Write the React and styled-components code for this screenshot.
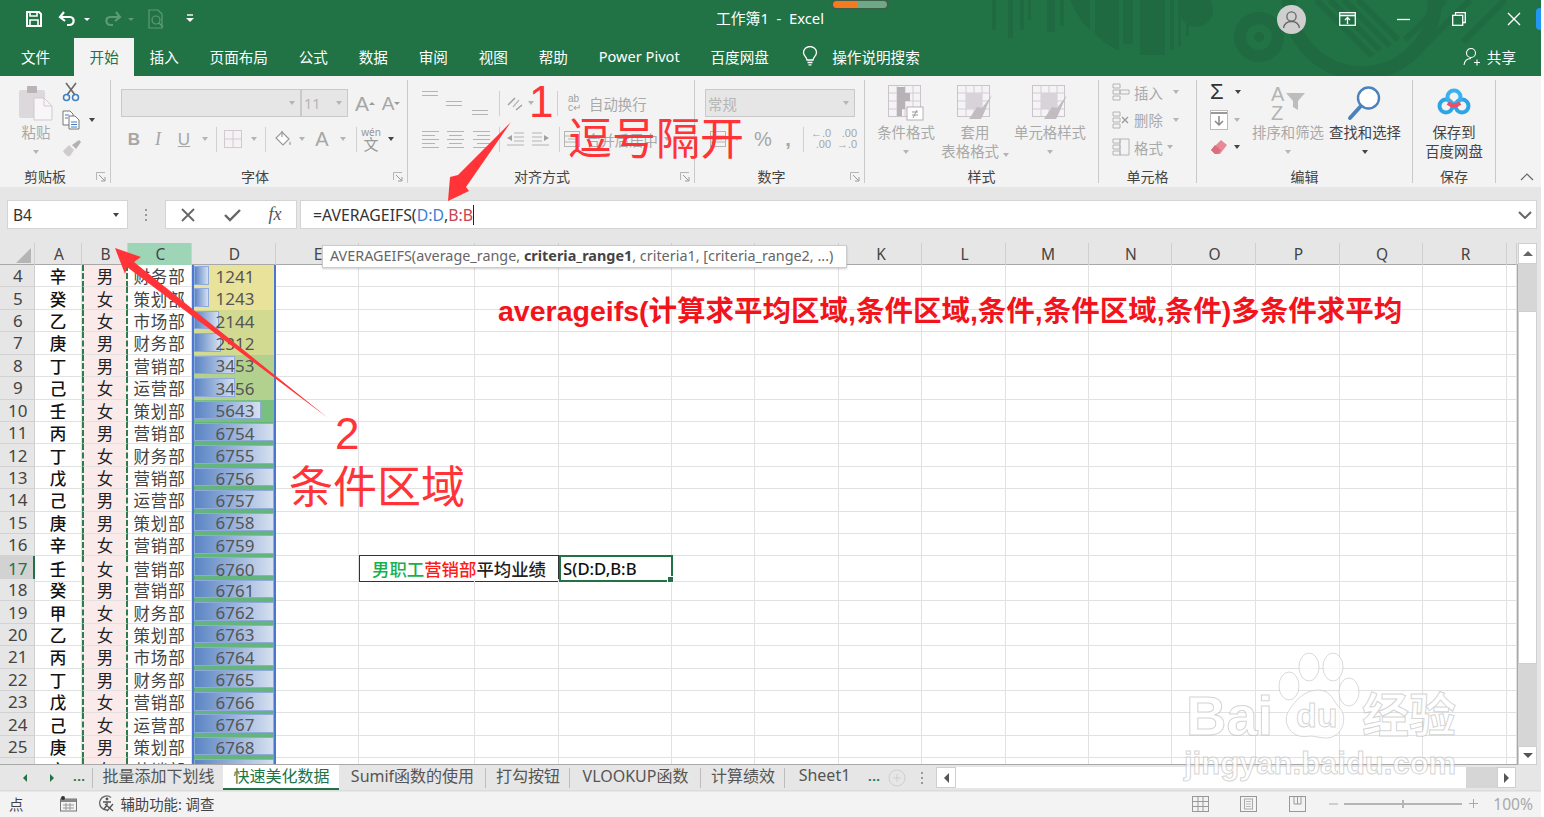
import React from 'react'
import styled, { createGlobalStyle } from 'styled-components'

const GlobalStyle = createGlobalStyle`
  html, body { margin: 0; padding: 0; background: #fff; overflow: hidden; }
  body { font-family: "Noto Sans CJK SC", "Noto Sans", sans-serif; }
`

const CJK = `"Noto Sans", "Noto Sans CJK SC", sans-serif`
const GREEN = '#217346'
const MUTED = '#a9a9a9'

const Window = styled.div`
  position: relative;
  width: 1541px;
  height: 817px;
  display: flex;
  flex-direction: column;
  overflow: hidden;
  font-family: ${CJK};
`
const Header = styled.header`
  position: relative;
  height: 76px;
  flex: none;
  background: ${GREEN};
`
const Decor = styled.svg`
  position: absolute;
  left: 0;
  top: 0;
`
const TitleRow = styled.div`
  position: relative;
  height: 38px;
  display: flex;
  align-items: center;
  padding-left: 22px;
  color: #fff;
`
const Slot = styled.div`
  flex: none;
  width: ${p => p.$w}px;
  margin-left: ${p => p.$ml || 0}px;
  display: flex;
  align-items: center;
  justify-content: center;
`
const Title = styled.div`
  margin-left: 517px;
  font-size: 14.8px;
  white-space: pre;
  line-height: 20px;
  position: relative;
  top: -1px;
`
const Pill = styled.div`
  align-self: flex-start;
  margin-left: 7px;
  width: 58px;
  height: 11px;
  margin-top: -1px;
  border-radius: 6px;
  border: 2px solid #3c5f4a;
  box-sizing: border-box;
  background: linear-gradient(90deg, #f47a20 0 47%, #6fa884 47%);
`
const Avatar = styled.div`
  margin-left: auto;
  margin-right: 14px;
  width: 29px;
  height: 29px;
  border-radius: 50%;
  background: #cfcfcf;
  display: flex;
  align-items: center;
  justify-content: center;
`
const MenuRow = styled.nav`
  position: relative;
  height: 38px;
  display: flex;
  align-items: stretch;
  padding-left: 21px;
  color: #fff;
  font-size: 14.6px;
`
const MenuItem = styled.div`
  display: flex;
  align-items: center;
  padding: 0 15.4px 2px;
  white-space: nowrap;
  background: ${p => (p.$active ? '#f3f3f3' : 'transparent')};
  color: ${p => (p.$active ? GREEN : '#fff')};
`
const FileItem = styled(MenuItem)`
  padding: 0 24px 2px 0;
`
const BulbItem = styled(MenuItem)`
  padding: 0 14px 2px 18px;
`
const SearchItem = styled(MenuItem)`
  padding-left: 0;
`
const Share = styled.div`
  margin-left: auto;
  padding: 0 25px 2px 0;
  display: flex;
  align-items: center;
  gap: 6px;
  font-size: 14.6px;
`
const BlueMark = styled.div`
  position: absolute;
  left: 1536px;
  top: 8px;
  width: 8px;
  height: 22px;
  border-radius: 4px 0 0 4px;
  background: #2196f3;
`

const Ribbon = styled.section`
  height: 111px;
  flex: none;
  display: flex;
  background: #f3f3f3;
  color: ${MUTED};
  font-size: 14.4px;
  padding-top: 4px;
  box-sizing: border-box;
`
const Group = styled.div`
  flex: none;
  width: ${p => p.$w}px;
  height: 103px;
  box-sizing: border-box;
  border-right: 1px solid #c9c9c9;
  display: flex;
  flex-direction: column;
`
const GroupBody = styled.div`
  flex: 1;
  min-height: 0;
  display: flex;
  padding-left: ${p => p.$pl || 0}px;
  padding-top: ${p => p.$pt || 0}px;
`
const GroupFoot = styled.div`
  height: 14px;
  position: relative;
  top: 1px;
  display: grid;
  grid-template-columns: 1fr auto 1fr;
  align-items: center;
  font-size: 14px;
  color: #444;
  line-height: 14px;
  & > span { grid-column: 2; white-space: nowrap; position: relative; left: ${p => p.$shift || 0}px; }
`
const Launcher = styled.svg`
  grid-column: 3;
  justify-self: end;
  margin-right: 4px;
`
const Big = styled.div`
  flex: none;
  width: ${p => p.$w}px;
  margin-left: ${p => p.$ml || 0}px;
  display: flex;
  flex-direction: column;
  align-items: center;
  color: ${p => (p.$on ? '#444' : MUTED)};
  line-height: 19px;
  white-space: nowrap;
`
const BigIcon = styled.div`
  height: 38px;
  display: flex;
  align-items: center;
  justify-content: center;
  margin-bottom: 1px;
`
const BigCaret = styled.div`
  height: 19px;
  display: flex;
  align-items: center;
`
const Caret = styled.i`
  display: inline-block;
  width: 0;
  height: 0;
  border-left: 3.5px solid transparent;
  border-right: 3.5px solid transparent;
  border-top: 4px solid ${p => (p.$dark ? '#444' : '#b5b5b5')};
`
const Stack = styled.div`
  display: flex;
  flex-direction: column;
  gap: ${p => p.$gap || 0}px;
  margin-top: ${p => p.$mt || 0}px;
  margin-left: ${p => p.$ml || 0}px;
`
const ToolRow = styled.div`
  display: flex;
  align-items: center;
  height: ${p => p.$h || 24}px;
  white-space: nowrap;
  margin-top: ${p => p.$mt || 0}px;
`
const ToolLabel = styled.span`
  margin: 0 ${p => p.$mr || 10}px 0 4px;
`
const InlineLabel = styled.span`
  margin-left: ${p => p.$ml}px;
`
const ShiftUp = styled(Slot)`
  height: ${p => p.$h}px;
  align-items: ${p => p.$align || 'center'};
`
const Sep = styled.div`
  flex: none;
  width: 1px;
  height: 25px;
  background: #d0d0d0;
`
const Combo = styled.div`
  flex: none;
  box-sizing: border-box;
  width: ${p => p.$w}px;
  height: 28px;
  background: #e6e6e6;
  border: 1px solid #c9c9c9;
  display: flex;
  align-items: center;
  justify-content: space-between;
  padding: 0 5px 0 2px;
  font-size: 14.4px;
  color: #b5b5b5;
`
const Glyph = styled.span`
  font-family: ${p => (p.$serif ? '"Liberation Serif"' : '"Liberation Sans"')}, sans-serif;
  font-size: ${p => p.$s || 17}px;
  font-weight: ${p => (p.$b ? 700 : 400)};
  font-style: ${p => (p.$i ? 'italic' : 'normal')};
  text-decoration: ${p => (p.$u ? 'underline' : 'none')};
  color: ${p => p.$c || '#a6a6a6'};
  width: ${p => (p.$w ? `${p.$w}px` : 'auto')};
  line-height: 1;
`
const Wen = styled.span`
  display: flex;
  flex-direction: column;
  align-items: center;
  font-size: 10px;
  line-height: 10px;
  color: #999;
  & b { font-weight: 400; font-size: 15px; line-height: 14px; }
`
const DecimalPair = styled.span`
  display: flex;
  flex-direction: column;
  align-items: flex-end;
  font: 11px/11px "Liberation Sans", sans-serif;
  color: #a6a6a6;
`
const WrapMark = styled.span`
  display: block;
  width: 16px;
  font: 10px/9px "Liberation Sans", sans-serif;
  color: #a0a0a0;
`
const SortBox = styled.span`
  position: relative;
  display: block;
  width: 34px;
  height: 38px;
  & > b {
    position: absolute;
    left: 0;
    font: 400 20px/20px "Liberation Sans", sans-serif;
    color: #b4b4b4;
  }
  & > svg { position: absolute; left: 15px; top: 8px; }
`
const Collapse = styled.div`
  flex: 1;
  display: flex;
  align-items: flex-end;
  justify-content: flex-end;
  padding: 0 7px 2px 0;
  height: 103px;
  box-sizing: border-box;
`

const FormulaBand = styled.div`
  height: 56px;
  flex: none;
  box-sizing: border-box;
  padding: 13px 4px 14px 7px;
  background: #e6e6e6;
  display: flex;
  align-items: stretch;
`
const FBox = styled.div`
  flex: ${p => (p.$grow ? 1 : 'none')};
  width: ${p => (p.$w ? `${p.$w}px` : 'auto')};
  margin-left: ${p => p.$ml || 0}px;
  box-sizing: border-box;
  background: #fff;
  border: 1px solid #d4d4d4;
  display: flex;
  align-items: center;
  font-size: 15.5px;
  color: #333;
`
const NameBox = styled(FBox)`
  justify-content: space-between;
  padding: 0 8px 0 5px;
`
const FormulaText = styled.div`
  flex: 1;
  padding-left: 12px;
  display: flex;
  align-items: center;
  font-size: 15.8px;
  white-space: pre;
  line-height: 22px;
`
const Ref = styled.span`
  color: ${p => p.$c};
`
const TextCaret = styled.i`
  display: inline-block;
  width: 1px;
  height: 20px;
  background: #222;
`
const FxMark = styled.span`
  font: italic 18px "Liberation Serif", serif;
  color: #555;
`
const Dots = styled.div`
  flex: none;
  width: ${p => p.$w || 36}px;
  display: flex;
  flex-direction: column;
  gap: 3px;
  align-items: center;
  justify-content: center;
  & i { width: 2px; height: 2px; background: #9a9a9a; }
`

const SheetArea = styled.div`
  flex: none;
  display: flex;
  height: 522px;
`
const SheetMain = styled.div`
  position: relative;
  flex: none;
  width: 1518px;
  display: flex;
  flex-direction: column;
`
const COLUMNS = '35px 47px 46px 64px 84px 83px 116px 84px 113px 83px 84px 83px 84px 83px 83px 84px 84px 83px 84px 10px'
const HeadRow = styled.div`
  height: 21px;
  flex: none;
  display: grid;
  grid-template-columns: ${COLUMNS};
  background: #e6e6e6;
  border-bottom: 1px solid #a8a8a8;
`
const ColHead = styled.div`
  display: flex;
  align-items: center;
  justify-content: center;
  padding-left: 2px;
  font-size: 15.5px;
  color: #444;
  border-right: 1px solid #cfcfcf;
  background: ${p => (p.$on ? '#9fd5b7' : 'transparent')};
`
const Corner = styled.div`
  display: flex;
  align-items: flex-end;
  justify-content: flex-end;
  padding: 0 3px 2px 0;
  border-right: 1px solid #cfcfcf;
`
const Body = styled.div`
  flex: 1;
  min-height: 0;
  overflow: hidden;
  background: #fff;
  border-right: 1px solid #a8a8a8;
  border-bottom: 1px solid #a8a8a8;
`
const Row = styled.div`
  height: 22.43px;
  display: grid;
  grid-template-columns: ${COLUMNS};
`
const Cell = styled.div`
  box-sizing: border-box;
  border-right: 1px solid #e1e1e1;
  border-bottom: 1px solid #e1e1e1;
  display: flex;
  align-items: center;
  justify-content: center;
  font-size: 16.5px;
  white-space: nowrap;
  overflow: hidden;
  color: #333;
`
const RowHead = styled(Cell)`
  background: ${p => (p.$on ? '#d2d2d2' : '#e6e6e6')};
  color: ${p => (p.$on ? GREEN : '#444')};
  border-right: ${p => (p.$on ? `2px solid ${GREEN}` : '1px solid #cfcfcf')};
  border-bottom: 1px solid #d2d2d2;
  justify-content: flex-start;
  font-size: 17px;
  padding-left: ${p => (p.$short ? 13 : 8)}px;
`
const NameCell = styled(Cell)`
  color: #111;
  font-weight: 500;
  padding-top: 1px;
`
const GenderCell = styled(Cell)`
  background: #fbeaea;
  color: #222;
  padding-top: 1px;
  border-left: 2px dashed #2f7d4f;
  border-right: 2px dashed #2f7d4f;
`
const DeptCell = styled(Cell)`
  color: #444;
  padding-top: 1px;
  letter-spacing: 0.8px;
`
const ValueCell = styled(Cell)`
  position: relative;
  background: ${p => p.$bg};
  border-left: 2px solid #4a78d0;
  border-right: 2px solid #4a78d0;
  border-bottom: 0;
  color: #555;
  font-size: 17px;
  padding-left: 2px;
  & span { position: relative; }
`
const DataBar = styled.div`
  position: absolute;
  left: 0;
  top: 1px;
  height: 18.5px;
  box-sizing: border-box;
  border: 1px solid #8ea9db;
  background: linear-gradient(90deg, #5b85c5, #d6e0f0);
`
const LabelCell = styled(Cell)`
  grid-column: span 2;
  margin-top: -1px;
  height: calc(100% + 1px);
  border: 1px solid #333;
  font-weight: 500;
  font-size: 17.4px;
  color: #222;
`
const Tinted = styled.span`
  color: ${p => p.$c};
`
const ActiveCell = styled(Cell)`
  position: relative;
  overflow: visible;
  margin: -1px -1px 0 0;
  height: calc(100% + 1px);
  border: 2px solid ${GREEN};
  justify-content: flex-start;
  padding-left: 2px;
  font-weight: 500;
  font-size: 16.7px;
  color: #111;
`
const Handle = styled.i`
  position: absolute;
  right: -3px;
  bottom: -3px;
  width: 5px;
  height: 5px;
  background: ${GREEN};
  border: 1px solid #fff;
`
const Tooltip = styled.div`
  position: absolute;
  left: 322px;
  top: 2px;
  width: 525px;
  height: 23px;
  box-sizing: border-box;
  background: #fff;
  border: 1px solid #cdcdcd;
  box-shadow: 0 1px 2px rgba(0, 0, 0, 0.2);
  padding: 0 0 3px 7px;
  display: flex;
  align-items: center;
  font-size: 14.4px;
  color: #666;
  white-space: pre;
  & b { color: #444; }
`
const VScroll = styled.div`
  flex: none;
  width: 23px;
  padding-right: 4px;
  box-sizing: border-box;
  background: #e6e6e6;
  display: flex;
`
const VTrack = styled.div`
  flex: 1;
  background: #d6d6d6;
  display: flex;
  flex-direction: column;
  justify-content: space-between;
`
const ScrollBtn = styled.div`
  flex: none;
  box-sizing: border-box;
  width: ${p => (p.$w ? `${p.$w}px` : 'auto')};
  height: ${p => p.$h || 20}px;
  background: #fff;
  border: 1px solid #cfcfcf;
  display: flex;
  align-items: center;
  justify-content: center;
`
const VThumb = styled.div`
  flex: none;
  height: 353px;
  margin-top: 47px;
  margin-bottom: 82px;
  background: #fff;
  border: 1px solid #cfcfcf;
  box-sizing: border-box;
`

const TabBar = styled.div`
  height: 25px;
  flex: none;
  background: #e6e6e6;
  display: flex;
  align-items: stretch;
  font-size: 16px;
  color: #555;
  border-bottom: 1px solid #dcdcdc;
`
const Tab = styled.div`
  flex: none;
  box-sizing: border-box;
  display: flex;
  align-items: center;
  justify-content: center;
  width: ${p => p.$w}px;
  padding: 0 0 5px 1px;
  white-space: nowrap;
  ${p => p.$active && `
    background: #fff;
    color: ${GREEN};
    border-bottom: 2px solid ${GREEN};
    padding-bottom: 3px;
  `}
`
const TabSep = styled.div`
  flex: none;
  width: 1px;
  margin: 3px 0 2px;
  background: #bdbdbd;
`
const DotsH = styled.div`
  flex: none;
  color: ${GREEN};
  font-weight: 700;
  letter-spacing: 0.5px;
  font-size: 13px;
  line-height: 22px;
  margin-left: ${p => p.$ml}px;
  width: ${p => p.$w}px;
`
const HTrack = styled.div`
  flex: none;
  width: 580px;
  margin: 2px 0;
  background: #d6d6d6;
  display: flex;
`
const HThumb = styled.div`
  flex: none;
  width: 510px;
  background: #fff;
`
const Spacer = styled.div`
  flex: 1;
`

const StatusBar = styled.footer`
  flex: 1;
  min-height: 0;
  background: #f3f3f3;
  display: flex;
  align-items: center;
  font-size: 14.4px;
  color: #444;
  padding: 0 0 2px 9px;
  border-top: 1px solid #e6e6e6;
`
const StatusRight = styled.div`
  margin-left: auto;
  display: flex;
  align-items: center;
  color: ${MUTED};
`
const Slider = styled.div`
  position: relative;
  width: 118px;
  height: 2px;
  background: #b5b5b5;
  margin: 0 5px;
  &::after {
    content: '';
    position: absolute;
    left: 58px;
    top: -3px;
    width: 2px;
    height: 8px;
    background: #b5b5b5;
  }
`
const Percent = styled.span`
  margin: 0 8px 0 14px;
  font-size: 15.6px;
`

const Layer = styled.div`
  position: absolute;
  inset: 0;
  pointer-events: none;
`
const Drawing = styled.svg`
  position: absolute;
  left: 0;
  top: 0;
`
const Note = styled.div`
  position: absolute;
  left: ${p => p.$x}px;
  top: ${p => p.$y}px;
  color: ${p => p.$c || '#ff3338'};
  font-size: ${p => p.$s || 44}px;
  font-weight: ${p => p.$w || 400};
  line-height: 1;
  white-space: nowrap;
  font-family: "Liberation Sans", "Noto Sans CJK SC", sans-serif;
`
const Mark = styled.div`
  position: absolute;
  left: ${p => p.$x}px;
  top: ${p => p.$y}px;
  font-size: ${p => p.$s}px;
  font-weight: 700;
  line-height: 1;
  white-space: nowrap;
  color: rgba(255, 255, 255, 0.75);
  -webkit-text-stroke: 1px rgba(175, 175, 175, 0.55);
  font-family: "Liberation Sans", "Noto Sans CJK SC", sans-serif;
`

const RAW = `4 辛 男 财务部 1241|5 癸 女 策划部 1243|6 乙 女 市场部 2144|7 庚 男 财务部 2312|8 丁 男 营销部 3453|9 己 女 运营部 3456|10 壬 女 策划部 5643|11 丙 男 营销部 6754|12 丁 女 财务部 6755|13 戊 女 营销部 6756|14 己 男 运营部 6757|15 庚 男 策划部 6758|16 辛 女 营销部 6759|17 壬 女 营销部 6760|18 癸 男 营销部 6761|19 甲 女 财务部 6762|20 乙 女 策划部 6763|21 丙 男 市场部 6764|22 丁 男 财务部 6765|23 戊 女 营销部 6766|24 己 女 运营部 6767|25 庚 男 策划部 6768|26 辛 女 营销部 6769`
const rows = RAW.split('|').map(r => r.split(' '))
// F..J sit under the function tooltip
const LETTERS = ['E', '', '', '', '', '', 'K', 'L', 'M', 'N', 'O', 'P', 'Q', 'R', '']

const scaleColor = v => {
  if (v < 2000) return '#e9e29a'
  if (v < 3000) return '#d2da92'
  if (v < 4000) return '#b3d18e'
  if (v < 6000) return '#79bf82'
  return '#63b57d'
}
const barWidth = v => Math.min(80, (v / 6754) * 80)

const Svg = ({ w = 18, h = 18, children, ...rest }) => (
  <svg width={w} height={h} viewBox={`0 0 ${w} ${h}`} fill="none" {...rest}>{children}</svg>
)

const SaveIcon = () => (
  <Svg><path d="M2 2h12l2 2v12H2z" stroke="#fff" strokeWidth="2" /><path d="M5 2v4h7V2M5 16v-6h8v6" stroke="#fff" strokeWidth="1.6" /></Svg>
)
const UndoIcon = ({ c = '#fff', flip }) => (
  <Svg w={20} style={flip ? { transform: 'scaleX(-1)' } : undefined}>
    <path d="M6 2L2 7l5 4" stroke={c} strokeWidth="2.2" /><path d="M3 7h9c5 0 5 8-1 8H9" stroke={c} strokeWidth="2.2" />
  </Svg>
)
const PreviewIcon = () => (
  <Svg w={18} h={22}><path d="M2 2h9l4 4v14H2z" stroke="#5f9a78" strokeWidth="1.2" /><circle cx="9" cy="12" r="4" stroke="#5f9a78" strokeWidth="1.2" /><path d="M12 15l4 4" stroke="#5f9a78" strokeWidth="1.4" /></Svg>
)
const CustomizeIcon = () => (
  <Svg w={10} h={10}><path d="M2 1h6" stroke="#fff" strokeWidth="1.4" /><path d="M1 4h8L5 8z" fill="#fff" /></Svg>
)
const UserIcon = () => (
  <Svg w={19} h={19}><circle cx="9.5" cy="6.5" r="4.6" stroke="#666" strokeWidth="1.3" /><path d="M1.5 18c1-5 4-6.5 8-6.5s7 1.5 8 6.5" stroke="#666" strokeWidth="1.3" /></Svg>
)
const RibbonOpts = () => (
  <Svg w={17} h={14}><rect x=".7" y=".7" width="15.6" height="12.6" stroke="#fff" strokeWidth="1.3" /><path d="M1 3.5h15" stroke="#fff" strokeWidth="1.6" /><path d="M8.5 12V6M6 8l2.5-2.5L11 8" stroke="#fff" strokeWidth="1.3" /></Svg>
)
const MinIcon = () => <Svg w={13} h={3}><path d="M0 1.5h13" stroke="#fff" strokeWidth="1.3" /></Svg>
const RestoreIcon = () => (
  <Svg w={14} h={14}><rect x=".7" y="3.3" width="10" height="10" stroke="#fff" strokeWidth="1.3" /><path d="M3.5 3V.7h9.8v9.8H11" stroke="#fff" strokeWidth="1.3" /></Svg>
)
const CloseIcon = () => <Svg w={14} h={14}><path d="M1 1l12 12M13 1L1 13" stroke="#fff" strokeWidth="1.4" /></Svg>
const BulbIcon = () => (
  <Svg w={16} h={20}><path d="M5 14c0-3-3.5-4-3.5-7.5a6.5 6 0 0 1 13 0C14.5 10 11 11 11 14z" stroke="#fff" strokeWidth="1.3" /><path d="M5.5 16.5h5M6.5 18.8h3" stroke="#fff" strokeWidth="1.3" /></Svg>
)
const ShareIcon = () => (
  <Svg w={18} h={19}><circle cx="8" cy="6" r="4.5" stroke="#fff" strokeWidth="1.1" /><path d="M1 18c.5-4 3-6.5 7-6.5M11 15.5h6M14 12.5v6" stroke="#fff" strokeWidth="1.1" /></Svg>
)
const DialogMark = () => (
  <Launcher width="10" height="10" viewBox="0 0 10 10" fill="none"><path d="M.5 8V.5H9" stroke="#b5b5b5" /><path d="M3 3l5.5 5.5M9 5v4H5" stroke="#999" /></Launcher>
)
const PasteIcon = () => (
  <Svg w={34} h={36}>
    <rect x="0" y="5" width="26" height="28" rx="2" fill="#dcd8dc" />
    <rect x="8" y="1" width="10" height="7" rx="1" fill="#b8b4b8" />
    <path d="M15 13h10l8 8v14H15z" fill="#f8f6f8" stroke="#cfcbcf" />
    <path d="M25 13v8h8" stroke="#cfcbcf" />
  </Svg>
)
const CutIcon = () => (
  <Svg w={18} h={20}><path d="M4 1l9 12M14 1L5 13" stroke="#6a6a6a" strokeWidth="1.6" /><circle cx="4.5" cy="15.5" r="3" stroke="#3f7fc0" strokeWidth="1.5" /><circle cx="13.5" cy="15.5" r="3" stroke="#3f7fc0" strokeWidth="1.5" /></Svg>
)
const CopyIcon = () => (
  <Svg w={18} h={20}><path d="M1 1h7l3 3v11H1z" fill="#fff" stroke="#777" /><path d="M7 6h6l4 4v9H7z" fill="#fff" stroke="#777" /><path d="M3 5h4M3 8h3M9 12h6M9 14.5h6M9 17h6" stroke="#3f7fc0" /></Svg>
)
const BrushIcon = () => (
  <Svg w={20} h={18}><path d="M1 12l6-6 5 5-4 6c-3 1-5-2-7-5z" fill="#cfcbcf" /><path d="M10 6l7-5 2 2-5 7z" fill="#b4b0b4" /></Svg>
)
const BorderIcon = () => (
  <Svg w={18} h={18}><rect x=".5" y=".5" width="17" height="17" fill="#f6f1f5" stroke="#cfcbcf" /><path d="M9 1v16M1 9h16" stroke="#cfcbcf" /></Svg>
)
const FillIcon = () => (
  <Svg w={18} h={18}><path d="M8 2l7 7-6 6-7-7z" stroke="#999" strokeWidth="1.2" fill="#fff" /><path d="M8 1v6" stroke="#999" strokeWidth="1.2" /><path d="M16 11c1.5 2 1.5 4 0 4s-1.5-2 0-4z" fill="#bbb" /></Svg>
)
const Lines = ({ widths, gap = 4 }) => (
  <Svg w={18} h={(widths.length - 1) * gap + 1}>
    {widths.map(([x, l], i) => <path key={i} d={`M${x} ${i * gap + 0.5}h${l}`} stroke="#b4b4b4" />)}
  </Svg>
)
const OrientIcon = () => (
  <Svg w={18} h={18}><path d="M2 11l7-7M10 16l6-5" stroke="#a0a0a0" strokeWidth="1.5" /><path d="M7 13l6-7" stroke="#b8b8b8" strokeWidth="1.2" /></Svg>
)
const IndentIcon = ({ right }) => (
  <Svg w={18} h={14} style={right ? { transform: 'scaleX(-1)' } : undefined}>
    <path d="M8 1h10M8 5h10M8 9h10M1 13h17" stroke="#b4b4b4" /><path d="M1 6l5-3v6z" fill="#a0a0a0" />
  </Svg>
)
const MergeIcon = () => (
  <Svg w={16} h={16}><rect x=".5" y=".5" width="15" height="15" stroke="#b4b4b4" /><path d="M1 5h14M1 11h14M4 8h8" stroke="#b4b4b4" /></Svg>
)
const GridSheet = ({ children }) => (
  <Svg w={36} h={36}>
    <rect x=".5" y=".5" width="32" height="31" fill="#f6f3f6" stroke="#c9c5c9" />
    <path d="M1 8h31M1 16h31M1 24h31M9 1v30M17 1v30M25 1v30" stroke="#d2ced2" />
    {children}
  </Svg>
)
const CondIcon = () => (
  <GridSheet>
    <path d="M9 2h8v6h5v8h-5v8h-3v7H9z" fill="#b6b2b6" />
    <rect x="19" y="22" width="16" height="13" fill="#fff" stroke="#b4b0b4" />
    <path d="M24 27h6M24 30h6M29 25l-4 8" stroke="#999" />
  </GridSheet>
)
const TableStyleIcon = () => (
  <GridSheet>
    <path d="M9 8h16v16H9z" fill="#d8d3d8" />
    <path d="M35 10L25 23l-5-1-8 12h12l3-6 2-5z" fill="#c0bcc0" />
  </GridSheet>
)
const CellInsert = ({ kind }) => (
  <Svg w={18} h={18}>
    <path d="M1 1h7v4H1zM1 7h7v4H1zM1 13h7v4H1z" stroke="#b4b4b4" />
    {kind === 'ins' && <path d="M8 7h9v4H8z" stroke="#b4b4b4" />}
    {kind === 'del' && <path d="M10 6l6 6M16 6l-6 6" stroke="#999" strokeWidth="1.3" />}
    {kind === 'fmt' && <path d="M8 1h9v16H8z" stroke="#b4b4b4" />}
  </Svg>
)
const FillDown = () => (
  <Svg w={18} h={20}><rect x=".5" y=".5" width="17" height="19" fill="#fff" stroke="#bbb" /><path d="M1 3h16" stroke="#999" strokeWidth="2" /><path d="M9 6v9M5 11l4 4 4-4" stroke="#888" strokeWidth="1.5" /></Svg>
)
const EraserIcon = () => (
  <Svg w={18} h={16}><path d="M11 1l6 5-7 9-5 0-4-4z" fill="#e88a96" /><path d="M1 11l4-5 6 5-3 4H5z" fill="#d96f7d" /></Svg>
)
const SortIcon = () => (
  <SortBox>
    <b style={{ top: 0 }}>A</b>
    <b style={{ top: 19 }}>Z</b>
    <Svg w={20} h={20}><path d="M0 1h19l-7 8v9l-5-3V9z" fill="#bdbdbd" /></Svg>
  </SortBox>
)
const FindIcon = () => (
  <Svg w={36} h={36}><circle cx="21.5" cy="13" r="10.5" fill="#fff" stroke="#4a82bd" strokeWidth="2.4" /><path d="M13 22L3 33" stroke="#4a82bd" strokeWidth="4" strokeLinecap="round" /></Svg>
)
const NetdiskIcon = () => (
  <Svg w={34} h={30}>
    <circle cx="9" cy="18" r="6.5" stroke="#2ba5e6" strokeWidth="4" />
    <circle cx="25" cy="18" r="6.5" stroke="#2ba5e6" strokeWidth="4" />
    <circle cx="17" cy="9" r="6.5" stroke="#3ab1ee" strokeWidth="4" />
    <path d="M11 15c3 3 9 3 12 0" stroke="#ee4e65" strokeWidth="4" />
  </Svg>
)
const Chevron = ({ c = '#666', up }) => (
  <Svg w={14} h={8}><path d={up ? 'M1 7l6-6 6 6' : 'M1 1l6 6 6-6'} stroke={c} strokeWidth={up ? 1.2 : 2} /></Svg>
)
const Triangle = ({ dir = 'up', c = '#666', s = 5 }) => {
  const d = {
    up: `M0 ${s}L${s} 0L${s * 2} ${s}z`,
    down: `M0 0L${s} ${s}L${s * 2} 0z`,
    left: `M${s} 0L0 ${s}L${s} ${s * 2}z`,
    right: `M0 0L${s} ${s}L0 ${s * 2}z`,
  }[dir]
  const tall = dir === 'left' || dir === 'right'
  return <Svg w={tall ? s : s * 2} h={tall ? s * 2 : s}><path d={d} fill={c} /></Svg>
}
const CornerMark = () => <Svg w={15} h={15}><path d="M15 0v15H0z" fill="#b5b5b5" /></Svg>
const ViewGrid = () => (
  <Svg w={17} h={16}><rect x=".5" y=".5" width="16" height="15" stroke="#999" /><path d="M6 1v14M11 1v14M1 5.5h15M1 10.5h15" stroke="#999" /></Svg>
)
const ViewPage = () => (
  <Svg w={17} h={16}><rect x=".5" y=".5" width="16" height="15" stroke="#999" /><rect x="4.5" y="3" width="8" height="10" stroke="#aaa" /><path d="M6 5.5h5M6 8h5M6 10.5h5" stroke="#bbb" /></Svg>
)
const ViewBreak = () => (
  <Svg w={17} h={16}><rect x=".5" y=".5" width="16" height="15" stroke="#999" /><path d="M5 1v7h7V1M8.5 1v7" stroke="#999" /></Svg>
)
const MacroIcon = () => (
  <Svg w={17} h={16}><rect x=".5" y="3" width="16" height="12" fill="#f3f3f3" stroke="#777" /><path d="M1 3h15v3H1z" fill="#888" /><circle cx="3" cy="2" r="2" fill="#333" /><path d="M3 9h11M3 12h11M6 7v7M10 7v7" stroke="#999" /></Svg>
)
const AccessIcon = () => (
  <Svg w={18} h={17}><path d="M13 2.5A7 7 0 1 0 9 15" stroke="#666" strokeWidth="1.3" /><circle cx="9" cy="4" r="1.4" fill="#555" /><path d="M5 7h8M9 7v3M9 10l-3 4M7 9l8 7M15 9l-6 7" stroke="#555" strokeWidth="1.3" /></Svg>
)

const App = () => (
  <Window>
    <GlobalStyle />
    <Header>
      <Decor width="1541" height="76" viewBox="0 0 1541 76" fill="none">
        <g fill="#1f6a41">
          <path d="M992 0h4v30h-4zM1008 0h5v38h-5zM1020 0h4v30h-4zM1028 0h3v20h-3z" />
          <path d="M1047 0h8v32h-8zM1060 0h4v26h-4zM1070 0h20v30q-10-8-20-30z" />
          <path d="M1095 0h24v50q-12-4-24-16zM1140 0h25v55h-25zM1123 0h10v44h-10z" />
          <path d="M1170 0h4v50h-4zM1178 0h3v46h-3zM1186 0h3v36h-3z" />
          <circle cx="1196" cy="10" r="17" />
        </g>
        <circle cx="1259" cy="37" r="19" stroke="#1f6a41" strokeWidth="12" />
        <circle cx="1259" cy="37" r="5" fill="#1f6a41" />
        <circle cx="1362" cy="0" r="73" stroke="#1f6a41" strokeWidth="14" />
        <path d="M1316 0l56 56M1330 0l50 50M1344 0l46 46M1358 0l40 40M1445 0l-40 40M1470 0l-45 45M1505 0l-42 42" stroke="#1f6a41" strokeWidth="6" />
      </Decor>
      <TitleRow>
        <Slot $w={24}><SaveIcon /></Slot>
        <Slot $w={32} $ml={6}><UndoIcon /></Slot>
        <Slot $w={6}><Triangle dir="down" c="#fff" s={3} /></Slot>
        <Slot $w={32} $ml={6}><UndoIcon c="#5f9a78" flip /></Slot>
        <Slot $w={6}><Triangle dir="down" c="#5f9a78" s={3} /></Slot>
        <Slot $w={24} $ml={10}><PreviewIcon /></Slot>
        <Slot $w={18} $ml={13}><CustomizeIcon /></Slot>
        <Title>工作簿1  -  Excel</Title>
        <Pill />
        <Avatar><UserIcon /></Avatar>
        <Slot $w={55}><RibbonOpts /></Slot>
        <Slot $w={56}><MinIcon /></Slot>
        <Slot $w={55}><RestoreIcon /></Slot>
        <Slot $w={55}><CloseIcon /></Slot>
      </TitleRow>
      <MenuRow>
        <FileItem>文件</FileItem>
        <MenuItem $active>开始</MenuItem>
        {['插入', '页面布局', '公式', '数据', '审阅', '视图', '帮助', 'Power Pivot', '百度网盘'].map(t => <MenuItem key={t}>{t}</MenuItem>)}
        <BulbItem><BulbIcon /></BulbItem>
        <SearchItem>操作说明搜索</SearchItem>
        <Share><ShareIcon />共享</Share>
      </MenuRow>
    </Header>
    <BlueMark />

    <Ribbon>
      <Group $w={111}>
        <GroupBody $pl={19} $pt={4}>
          <Big $w={34}>
            <BigIcon><PasteIcon /></BigIcon>
            粘贴
            <BigCaret><Caret /></BigCaret>
          </Big>
          <Stack $gap={8} $mt={-2} $ml={9}>
            <ToolRow $h={20}><CutIcon /></ToolRow>
            <ToolRow $h={20}><CopyIcon /><Slot $w={24}><Caret $dark /></Slot></ToolRow>
            <ToolRow $h={20}><BrushIcon /></ToolRow>
          </Stack>
        </GroupBody>
        <GroupFoot $shift={-10}><span>剪贴板</span><DialogMark /></GroupFoot>
      </Group>

      <Group $w={297}>
        <GroupBody $pl={10} $pt={9}>
          <Stack>
            <ToolRow $h={28}>
              <Combo $w={180}><span /><Caret /></Combo>
              <Combo $w={47}>11<Caret /></Combo>
              <Slot $w={26} $ml={4}><Glyph $s={21}>A</Glyph><Triangle c="#999" s={3} /></Slot>
              <Slot $w={26}><Glyph $s={19}>A</Glyph><Triangle dir="down" c="#999" s={3} /></Slot>
            </ToolRow>
            <ToolRow $h={24} $mt={10}>
              <Slot $w={24} $ml={1}><Glyph $b>B</Glyph></Slot>
              <Slot $w={24}><Glyph $i $serif $s={18}>I</Glyph></Slot>
              <Slot $w={28}><Glyph $u>U</Glyph></Slot>
              <Slot $w={14}><Caret /></Slot>
              <Slot $w={8}><Sep /></Slot>
              <Slot $w={26}><BorderIcon /></Slot>
              <Slot $w={16}><Caret /></Slot>
              <Slot $w={6}><Sep /></Slot>
              <Slot $w={30}><FillIcon /></Slot>
              <Slot $w={8}><Caret /></Slot>
              <Slot $w={32}><Glyph $s={20}>A</Glyph></Slot>
              <Slot $w={10}><Caret /></Slot>
              <Slot $w={16}><Sep /></Slot>
              <Slot $w={14}><Wen>wén<b>文</b></Wen></Slot>
              <Slot $w={26}><Caret $dark /></Slot>
            </ToolRow>
          </Stack>
        </GroupBody>
        <GroupFoot $shift={-4}><span>字体</span><DialogMark /></GroupFoot>
      </Group>

      <Group $w={287}>
        <GroupBody $pl={11} $pt={9}>
          <Stack>
            <ToolRow $h={28}>
              <ShiftUp $w={24} $h={24} $align="flex-start"><Lines widths={[[0, 16], [0, 16]]} /></ShiftUp>
              <ShiftUp $w={24} $h={14}><Lines widths={[[0, 16], [0, 16]]} /></ShiftUp>
              <ShiftUp $w={28} $h={24} $align="flex-end"><Lines widths={[[0, 16], [0, 16]]} /></ShiftUp>
              <Slot $w={8}><Sep /></Slot>
              <Slot $w={24}><OrientIcon /></Slot>
              <Slot $w={8}><Caret /></Slot>
              <Slot $w={22}><span /></Slot>
              <Sep />
              <Slot $w={16} $ml={10}><WrapMark>ab<br />c↵</WrapMark></Slot>
              <InlineLabel $ml={5}>自动换行</InlineLabel>
            </ToolRow>
            <ToolRow $h={24} $mt={10}>
              <Slot $w={24}><Lines widths={[[0, 17], [0, 13], [0, 17], [0, 13], [0, 17]]} /></Slot>
              <Slot $w={26}><Lines widths={[[0, 17], [2, 13], [0, 17], [2, 13], [0, 17]]} /></Slot>
              <Slot $w={26}><Lines widths={[[0, 17], [4, 13], [0, 17], [4, 13], [0, 17]]} /></Slot>
              <Slot $w={8}><Sep /></Slot>
              <Slot $w={24}><IndentIcon /></Slot>
              <Slot $w={28}><IndentIcon right /></Slot>
              <Slot $w={8}><Sep /></Slot>
              <Slot $w={16} $ml={1}><MergeIcon /></Slot>
              <InlineLabel $ml={6}>合并后居中</InlineLabel>
              <Slot $w={18}><Caret /></Slot>
            </ToolRow>
          </Stack>
        </GroupBody>
        <GroupFoot $shift={-9}><span>对齐方式</span><DialogMark /></GroupFoot>
      </Group>

      <Group $w={170}>
        <GroupBody $pl={10} $pt={9}>
          <Stack>
            <ToolRow $h={28}><Combo $w={150}><span>常规</span><Caret /></Combo></ToolRow>
            <ToolRow $h={24} $mt={10}>
              <Slot $w={24} $ml={1}><MergeIcon /></Slot>
              <Slot $w={14}><Caret /></Slot>
              <Slot $w={28} $ml={5}><Glyph $s={20}>%</Glyph></Slot>
              <Slot $w={22}><Glyph $s={20} $b>,</Glyph></Slot>
              <Slot $w={8}><Sep /></Slot>
              <Slot $w={28}><DecimalPair><span>←.0</span><span>.00</span></DecimalPair></Slot>
              <Slot $w={24}><DecimalPair><span>.00</span><span>→.0</span></DecimalPair></Slot>
            </ToolRow>
          </Stack>
        </GroupBody>
        <GroupFoot $shift={-8}><span>数字</span><DialogMark /></GroupFoot>
      </Group>

      <Group $w={234}>
        <GroupBody $pl={5} $pt={4}>
          <Big $w={72}>
            <BigIcon><CondIcon /></BigIcon>
            条件格式
            <BigCaret><Caret /></BigCaret>
          </Big>
          <Big $w={66}>
            <BigIcon><TableStyleIcon /></BigIcon>
            套用
            <span>表格格式 <Caret /></span>
          </Big>
          <Big $w={84}>
            <BigIcon><TableStyleIcon /></BigIcon>
            单元格样式
            <BigCaret><Caret /></BigCaret>
          </Big>
        </GroupBody>
        <GroupFoot><span>样式</span></GroupFoot>
      </Group>

      <Group $w={98}>
        <GroupBody $pl={13}>
          <Stack $gap={3.5}>
            <ToolRow $h={24}><CellInsert kind="ins" /><ToolLabel>插入</ToolLabel><Caret /></ToolRow>
            <ToolRow $h={24}><CellInsert kind="del" /><ToolLabel>删除</ToolLabel><Caret /></ToolRow>
            <ToolRow $h={24}><CellInsert kind="fmt" /><ToolLabel $mr={4}>格式</ToolLabel><Caret /></ToolRow>
          </Stack>
        </GroupBody>
        <GroupFoot><span>单元格</span></GroupFoot>
      </Group>

      <Group $w={216}>
        <GroupBody $pl={13} $pt={4}>
          <Stack $gap={3.5} $mt={-4}>
            <ToolRow $h={24}><Glyph $s={22} $c="#333" $w={18}>Σ</Glyph><Slot $w={20}><Caret $dark /></Slot></ToolRow>
            <ToolRow $h={24}><FillDown /><Slot $w={18}><Caret /></Slot></ToolRow>
            <ToolRow $h={24}><EraserIcon /><Slot $w={18}><Caret $dark /></Slot></ToolRow>
          </Stack>
          <Big $w={76} $ml={2}>
            <BigIcon><SortIcon /></BigIcon>
            排序和筛选
            <BigCaret><Caret /></BigCaret>
          </Big>
          <Big $w={78} $on>
            <BigIcon><FindIcon /></BigIcon>
            查找和选择
            <BigCaret><Caret $dark /></BigCaret>
          </Big>
        </GroupBody>
        <GroupFoot><span>编辑</span></GroupFoot>
      </Group>

      <Group $w={83}>
        <GroupBody $pt={4}>
          <Big $w={82} $on>
            <BigIcon><NetdiskIcon /></BigIcon>
            保存到
            <span>百度网盘</span>
          </Big>
        </GroupBody>
        <GroupFoot><span>保存</span></GroupFoot>
      </Group>

      <Collapse><Chevron up /></Collapse>
    </Ribbon>

    <FormulaBand>
      <NameBox $w={121}>B4<Caret $dark /></NameBox>
      <Dots><i /><i /><i /></Dots>
      <FBox $w={132} $ml={1}>
        <Slot $w={44}><Svg w={14} h={14}><path d="M1 1l12 12M13 1L1 13" stroke="#666" strokeWidth="1.8" /></Svg></Slot>
        <Slot $w={44}><Svg w={17} h={14}><path d="M1 7l5 5L16 2" stroke="#666" strokeWidth="2.4" /></Svg></Slot>
        <Slot $w={42}><FxMark>fx</FxMark></Slot>
      </FBox>
      <FBox $grow $ml={3}>
        <FormulaText>=AVERAGEIFS(<Ref $c="#3b7fd1">D:D</Ref>,<Ref $c="#c9434f">B:B</Ref><TextCaret /></FormulaText>
        <Slot $w={22}><Chevron /></Slot>
      </FBox>
    </FormulaBand>

    <SheetArea>
      <SheetMain>
        <HeadRow>
          <Corner><CornerMark /></Corner>
          <ColHead>A</ColHead>
          <ColHead>B</ColHead>
          <ColHead $on>C</ColHead>
          <ColHead>D</ColHead>
          {LETTERS.map((l, i) => <ColHead key={i}>{l}</ColHead>)}
        </HeadRow>
        <Body>
          {rows.map(([n, name, sex, dept, val]) => {
            const v = Number(val)
            return (
              <Row key={n}>
                <RowHead $on={n === '17'} $short={n.length === 1}>{n}</RowHead>
                <NameCell>{name}</NameCell>
                <GenderCell>{sex}</GenderCell>
                <DeptCell>{dept}</DeptCell>
                <ValueCell $bg={scaleColor(v)}>
                  <DataBar style={{ width: barWidth(v) }} />
                  <span>{val}</span>
                </ValueCell>
                <Cell />
                {n === '17' ? (
                  <>
                    <LabelCell><Tinted $c="#14b14c">男职工</Tinted><Tinted $c="#ff1a1a">营销部</Tinted>平均业绩</LabelCell>
                    <ActiveCell>S(D:D,B:B<Handle /></ActiveCell>
                  </>
                ) : (
                  <><Cell /><Cell /><Cell /></>
                )}
                {LETTERS.slice(4).map((l, i) => <Cell key={i} />)}
              </Row>
            )
          })}
        </Body>
        <Tooltip>AVERAGEIFS(average_range, <b>criteria_range1</b>, criteria1, [criteria_range2, ...)</Tooltip>
      </SheetMain>
      <VScroll>
        <VTrack>
          <ScrollBtn $h={21}><Triangle c="#666" s={5} /></ScrollBtn>
          <VThumb />
          <ScrollBtn $h={19}><Triangle dir="down" c="#555" s={5} /></ScrollBtn>
        </VTrack>
      </VScroll>
    </SheetArea>

    <TabBar>
      <Slot $w={10} $ml={20}><Triangle dir="left" c={GREEN} s={4} /></Slot>
      <Slot $w={10} $ml={17}><Triangle dir="right" c={GREEN} s={4} /></Slot>
      <DotsH $ml={16} $w={19}>...</DotsH>
      <TabSep />
      <Tab $w={130}>批量添加下划线</Tab>
      <Tab $w={116} $active>快速美化数据</Tab>
      <Tab $w={146}>Sumif函数的使用</Tab>
      <TabSep />
      <Tab $w={83}>打勾按钮</Tab>
      <TabSep />
      <Tab $w={130}>VLOOKUP函数</Tab>
      <TabSep />
      <Tab $w={83}>计算绩效</Tab>
      <TabSep />
      <Tab $w={78}>Sheet1</Tab>
      <DotsH $ml={5} $w={19}>...</DotsH>
      <Slot $w={20}><Svg w={18} h={18}><circle cx="9" cy="9" r="8" stroke="#cfcfcf" /><path d="M9 5v8M5 9h8" stroke="#cfcfcf" /></Svg></Slot>
      <Slot $w={29}><Dots $w={10}><i /><i /><i /></Dots></Slot>
      <HTrack>
        <ScrollBtn $w={20} $h={21}><Triangle dir="left" c="#555" s={5} /></ScrollBtn>
        <HThumb />
        <Spacer />
        <ScrollBtn $w={19} $h={21}><Triangle dir="right" c="#555" s={5} /></ScrollBtn>
      </HTrack>
    </TabBar>

    <StatusBar>
      <span>点</span>
      <Slot $w={20} $ml={35}><MacroIcon /></Slot>
      <Slot $w={20} $ml={19}><AccessIcon /></Slot>
      <InlineLabel $ml={3}>辅助功能: 调查</InlineLabel>
      <StatusRight>
        <Slot $w={48}><ViewGrid /></Slot>
        <Slot $w={48}><ViewPage /></Slot>
        <Slot $w={50}><ViewBreak /></Slot>
        <Slot $w={12} $ml={5}><Svg w={9} h={2}><path d="M0 1h9" stroke="#aaa" /></Svg></Slot>
        <Slider />
        <Slot $w={12}><Svg w={9} h={9}><path d="M0 4.5h9M4.5 0v9" stroke="#aaa" /></Svg></Slot>
        <Percent>100%</Percent>
      </StatusRight>
    </StatusBar>

    <Layer>
      <Drawing width="1541" height="817" viewBox="0 0 1541 817">
        <polygon points="511,122 466,187 469,191 448,201 450,177 458,175" fill="#ff3338" />
        <polygon points="115,248 141,257 134,262 328,418 127,267 125,274" fill="#ff3338" />
        <g stroke="#b9b9b9" strokeOpacity=".55" strokeWidth="1" fill="#fff" fillOpacity=".7">
          <ellipse cx="1309" cy="667" rx="10" ry="14" />
          <ellipse cx="1333" cy="667" rx="10" ry="14" />
          <ellipse cx="1289" cy="686" rx="10" ry="14" />
          <ellipse cx="1349" cy="692" rx="10" ry="14" />
          <path d="M1318 690c14 0 15 12 22 18 8 9 3 30-14 30-5 0-12-2-16-2-18 4-28-12-22-24 6-10 16-22 30-22z" />
        </g>
      </Drawing>
      <Note $x={529} $y={80}>1</Note>
      <Note $x={568} $y={118}>逗号隔开</Note>
      <Note $x={335} $y={412}>2</Note>
      <Note $x={289} $y={466}>条件区域</Note>
      <Note $x={498} $y={297} $s={28.5} $w={700} $c="#f2141c">averageifs(计算求平均区域,条件区域,条件,条件区域,条件)多条件求平均</Note>
      <Mark $x={1186} $y={688} $s={56}>Bai</Mark>
      <Mark $x={1296} $y={698} $s={34}>du</Mark>
      <Mark $x={1362} $y={692} $s={47}>经验</Mark>
      <Mark $x={1184} $y={748} $s={31}>jingyan.baidu.com</Mark>
    </Layer>
  </Window>
)

export default App
